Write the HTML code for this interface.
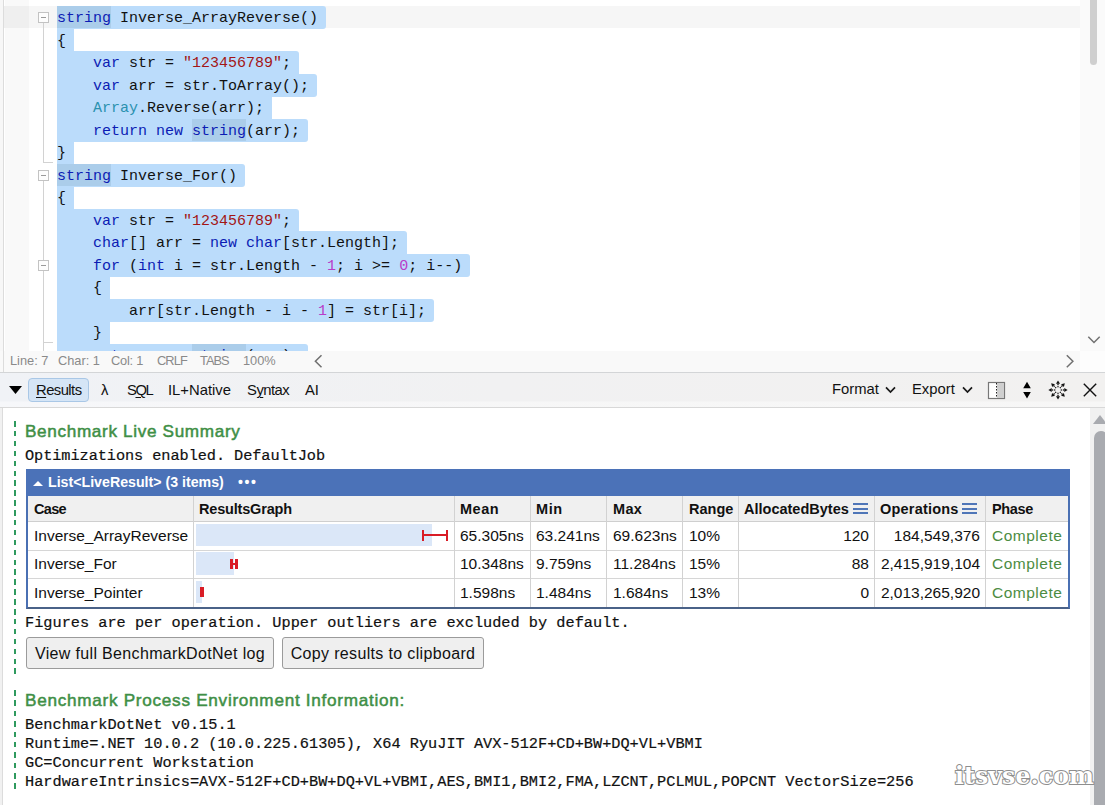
<!DOCTYPE html>
<html lang="en">
<head>
<meta charset="utf-8">
<title>LINQPad - Benchmark Live Summary</title>
<style>
*{box-sizing:border-box;margin:0;padding:0}
html,body{width:1105px;height:805px;overflow:hidden;background:#fff}
body{position:relative;font-family:"Liberation Sans","DejaVu Sans",sans-serif;color:#000}
.abs{position:absolute}

/* ---------- editor ---------- */
#ed{position:absolute;left:0;top:0;width:1105px;height:351px;overflow:hidden;background:#fff}
#ed .edge{position:absolute;left:0;top:0;width:4px;height:351px;background:#f7f7f7;border-right:1px solid #dcdcdc}
#ed .curline{position:absolute;left:4px;top:6px;width:1076px;height:22px;background:#f6f6f6}
#ed .curmargin{position:absolute;left:4px;top:6px;width:25px;height:22px;background:#efefef}
.sel{position:absolute;height:23px;background:#bbdcfb}
.wh{position:absolute;height:22px;background:#abcdea}
.cl{position:absolute;left:57px;height:22.5px;line-height:22.5px;white-space:pre;
    font-family:"Liberation Mono","DejaVu Sans Mono",monospace;font-size:15px;color:#111}
.k{color:#0c1cb4}.t{color:#2b91af}.s{color:#a31515}.n{color:#b83cc8}
.fbox{position:absolute;left:38px;width:11px;height:11px;border:1px solid #c3c3c3;background:#fdfdfd}
.fbox i{position:absolute;left:2px;top:4px;width:5px;height:1px;background:#9a9a9a}
.fv{position:absolute;left:43px;width:1px;background:#d2d2d2}
.fh{position:absolute;left:43px;width:10px;height:1px;background:#d2d2d2}
#vsb{position:absolute;left:1080px;top:0;width:25px;height:351px;background:#fafafa}
#vsb .th{position:absolute;left:10px;top:-6px;width:7px;height:71px;border-radius:4px;background:#cfcfcf}

/* ---------- status bar ---------- */
#st{position:absolute;left:0;top:351px;width:1105px;height:21px;background:#f9f9f9;border-left:1px solid #dcdcdc;border-left-width:0;
    font-size:12.8px;color:#8a8a8a;line-height:20px}
#st span{position:absolute;top:0;white-space:pre}

/* ---------- toolbar ---------- */
#tb{position:absolute;left:0;top:372px;width:1105px;height:36px;z-index:3;background:linear-gradient(#d3d5d7,#d3d5d7) top/100% 1px no-repeat,linear-gradient(#d8d8d8,#d8d8d8) bottom/100% 1px no-repeat,linear-gradient(to bottom,rgba(255,255,255,0) 29px,rgba(255,255,255,.4) 30px),linear-gradient(to right,#f0f2f6 0,#f1f1f2 45%,#f2f1f0 100%);
    font-size:14.8px;color:#111}
#tb .it{position:absolute;top:1px;height:35px;line-height:35px;white-space:pre}
#tb .btn{position:absolute;left:28px;top:6px;width:61px;height:24px;border:1px solid #a9c7e6;border-radius:4px;background:#d5e5f6}
u{text-decoration-thickness:1px;text-underline-offset:2px}

/* ---------- results ---------- */
#rs{position:absolute;left:0;top:407px;width:1105px;height:398px;background:#fff;overflow:hidden}
#rs .edge{position:absolute;left:0;top:0;width:3px;height:398px;background:#f1f1f1;border-right:1px solid #dcdcdc}
.dash{position:absolute;left:14px;width:2px;
  background:repeating-linear-gradient(to bottom,#2f9a5e 0,#2f9a5e var(--d),transparent var(--d),transparent var(--p))}
.h1{position:absolute;left:25px;margin-top:-0.5px;font-size:17.15px;font-weight:normal;color:#3f8f46;-webkit-text-stroke:0.5px #3f8f46;letter-spacing:0.58px;white-space:pre;line-height:22px;height:22px}
.mono{position:absolute;left:25px;font-family:"Liberation Mono","DejaVu Sans Mono",monospace;font-size:15.27px;
  white-space:pre;line-height:19px;height:19px;color:#111;margin-top:2px;-webkit-text-stroke:0.2px #111}
#tbl{position:absolute;left:26px;top:62px;width:1044px;height:140px;border:2px solid #4a70b3;border-top:0;border-bottom-color:#4a6288;background:#fff}
#tbl .cap{position:absolute;left:-2px;top:0;width:1044px;height:27px;background:#4b72b8;color:#fff;font-weight:bold;font-size:14.2px;line-height:26px}
#tbl .cap span{position:absolute;white-space:pre}
#tbl .hdr{position:absolute;left:0;top:27px;width:1040px;height:26px;background:#f0f0f0;border-bottom:1px solid #cfcfcf}
.vl{position:absolute;top:27px;width:1px;height:111px;background:#d2d2d2}
.hl{position:absolute;left:0;width:1040px;height:1px;background:#d6d6d6}
.th{position:absolute;top:27px;height:26px;line-height:27px;font-weight:bold;font-size:14.5px;white-space:pre;color:#111}
.td{position:absolute;height:28px;line-height:27px;font-size:15.5px;white-space:pre;color:#111}
.r{text-align:right}
.g{color:#4c8c42;letter-spacing:0.5px}
.bar{position:absolute;background:#dbe7f8}
.red{position:absolute;background:#d91c26}
.ham{position:absolute;top:34px;width:15px;height:11px;border-top:2px solid #4f76b8;border-bottom:2px solid #4f76b8}
.ham:after{content:"";position:absolute;left:0;top:2.5px;width:15px;height:2px;background:#4f76b8}
.pb{position:absolute;top:230px;height:32px;border:1px solid #9b9b9b;border-radius:3px;background:#efefef;
   font-size:16px;line-height:31px;text-align:center;white-space:pre;color:#111;letter-spacing:0.34px}
#rsb{position:absolute;left:1090px;top:0;width:17px;height:398px;background:#f1f1f1}
#rsb .th2{position:absolute;left:4px;top:24px;width:14px;height:400px;border-radius:7px;background:#a9abb0}
#rsb .up{position:absolute;left:3px;top:8px;width:0;height:0;border-left:7px solid transparent;border-right:7px solid transparent;border-bottom:9px solid #a9abb0}
#wm{position:absolute;z-index:5;left:955px;top:352px;font-family:"DejaVu Serif","Liberation Serif",serif;font-weight:bold;font-size:23.5px;
  color:#fff;-webkit-text-stroke:2px #8e8e8e;paint-order:stroke fill;white-space:pre;line-height:34px;letter-spacing:0.1px}
</style>
</head>
<body>

<!-- ================= EDITOR ================= -->
<div id="ed">
  <div class="edge"></div>
  <div class="abs" style="left:5px;top:0;width:24px;height:351px;background:#f9f9f9"></div>
  <div class="curline"></div>
  <div class="curmargin"></div>

  <!-- fold margin -->
  <div class="fv" style="top:23px;height:140px"></div>
  <div class="fh" style="top:162px"></div>
  <div class="fv" style="top:181px;height:170px"></div>
  <div class="fh" style="top:342px"></div>
  <div class="fbox" style="top:12px"><i></i></div>
  <div class="fbox" style="top:170px"><i></i></div>
  <div class="fbox" style="top:260px"><i></i></div>

<div class="sel" style="top:6.0px;left:57px;width:269.0px;border-radius:3px 3px 3px 0"></div>
<div class="wh" style="top:6.0px;left:57.0px;width:54.0px"></div>
<div class="sel" style="top:28.5px;left:57px;width:17.0px;border-radius:0px 0px 0px 0"></div>
<div class="sel" style="top:51.0px;left:57px;width:242.0px;border-radius:0px 3px 0px 0"></div>
<div class="sel" style="top:73.5px;left:57px;width:260.0px;border-radius:0px 3px 3px 0"></div>
<div class="sel" style="top:96.0px;left:57px;width:215.0px;border-radius:0px 0px 0px 0"></div>
<div class="sel" style="top:118.5px;left:57px;width:251.0px;border-radius:0px 3px 3px 0"></div>
<div class="wh" style="top:118.5px;left:192.0px;width:54.0px"></div>
<div class="sel" style="top:141.0px;left:57px;width:17.0px;border-radius:0px 0px 0px 0"></div>
<div class="sel" style="top:163.5px;left:57px;width:188.0px;border-radius:0px 3px 3px 0"></div>
<div class="wh" style="top:163.5px;left:57.0px;width:54.0px"></div>
<div class="sel" style="top:186.0px;left:57px;width:17.0px;border-radius:0px 0px 0px 0"></div>
<div class="sel" style="top:208.5px;left:57px;width:242.0px;border-radius:0px 3px 0px 0"></div>
<div class="sel" style="top:231.0px;left:57px;width:350.0px;border-radius:0px 3px 0px 0"></div>
<div class="sel" style="top:253.5px;left:57px;width:413.0px;border-radius:0px 3px 3px 0"></div>
<div class="sel" style="top:276.0px;left:57px;width:53.0px;border-radius:0px 0px 0px 0"></div>
<div class="sel" style="top:298.5px;left:57px;width:377.0px;border-radius:0px 3px 3px 0"></div>
<div class="sel" style="top:321.0px;left:57px;width:53.0px;border-radius:0px 0px 0px 0"></div>
<div class="sel" style="top:343.5px;left:57px;width:251.0px;border-radius:0px 3px 0px 0"></div>
<div class="wh" style="top:343.5px;left:192.0px;width:54.0px"></div>
<div class="cl" style="top:8.0px"><span class="k">string</span> Inverse_ArrayReverse()</div>
<div class="cl" style="top:30.5px">{</div>
<div class="cl" style="top:53.0px">    <span class="k">var</span> str = <span class="s">&quot;123456789&quot;</span>;</div>
<div class="cl" style="top:75.5px">    <span class="k">var</span> arr = str.ToArray();</div>
<div class="cl" style="top:98.0px">    <span class="t">Array</span>.Reverse(arr);</div>
<div class="cl" style="top:120.5px">    <span class="k">return</span> <span class="k">new</span> <span class="k">string</span>(arr);</div>
<div class="cl" style="top:143.0px">}</div>
<div class="cl" style="top:165.5px"><span class="k">string</span> Inverse_For()</div>
<div class="cl" style="top:188.0px">{</div>
<div class="cl" style="top:210.5px">    <span class="k">var</span> str = <span class="s">&quot;123456789&quot;</span>;</div>
<div class="cl" style="top:233.0px">    <span class="k">char</span>[] arr = <span class="k">new</span> <span class="k">char</span>[str.Length];</div>
<div class="cl" style="top:255.5px">    <span class="k">for</span> (<span class="k">int</span> i = str.Length - <span class="n">1</span>; i &gt;= <span class="n">0</span>; i--)</div>
<div class="cl" style="top:278.0px">    {</div>
<div class="cl" style="top:300.5px">        arr[str.Length - i - <span class="n">1</span>] = str[i];</div>
<div class="cl" style="top:323.0px">    }</div>
<div class="cl" style="top:345.5px">    <span class="k">return</span> <span class="k">new</span> <span class="k">string</span>(arr);</div>

  <div id="vsb"><div class="th"></div>
    <svg class="abs" style="left:7px;top:335px" width="14" height="10" viewBox="0 0 14 10"><path d="M1.3 1.8 L7 7.5 L12.7 1.8" fill="none" stroke="#707070" stroke-width="1.5"/></svg>
  </div>
</div>

<!-- ================= STATUS BAR ================= -->
<div id="st">
  <div class="abs" style="left:1080px;top:0;width:25px;height:21px;background:#fdfdfd"></div>
  <div class="abs" style="left:3px;top:0;width:1px;height:21px;background:#dcdcdc"></div>
  <span style="left:10px">Line: 7</span>
  <span style="left:58px">Char: 1</span>
  <span style="left:111px;letter-spacing:-0.2px">Col: 1</span>
  <span style="left:157px;letter-spacing:-0.9px">CRLF</span>
  <span style="left:200px;letter-spacing:-0.95px">TABS</span>
  <span style="left:243px">100%</span>
  <svg class="abs" style="left:313px;top:3px" width="10" height="14" viewBox="0 0 10 14"><path d="M8.5 1.2 L2.4 7.2 L8.5 13.2" fill="none" stroke="#707070" stroke-width="1.5"/></svg>
  <svg class="abs" style="left:1065px;top:3px" width="10" height="14" viewBox="0 0 10 14"><path d="M1.8 1.2 L7.9 7.2 L1.8 13.2" fill="none" stroke="#707070" stroke-width="1.5"/></svg>
</div>

<!-- ================= TOOLBAR ================= -->
<div id="tb">
  <svg class="abs" style="left:9px;top:14px" width="13" height="8" viewBox="0 0 13 8"><path d="M0 0 H13 L6.5 8 Z" fill="#000"/></svg>
  <div class="btn"></div>
  <span class="it" style="left:36px;letter-spacing:-0.55px"><u>R</u>esults</span>
  <span class="it" style="left:101px">λ</span>
  <span class="it" style="left:127px;letter-spacing:-1.4px">S<u>Q</u>L</span>
  <span class="it" style="left:168px">IL+Native</span>
  <span class="it" style="left:247px;letter-spacing:-0.5px">S<u>y</u>ntax</span>
  <span class="it" style="left:305px">AI</span>

  <span class="it" style="left:832px;top:0">Format</span>
  <svg class="abs" style="left:885px;top:14px" width="11" height="8" viewBox="0 0 11 8"><path d="M1 1.3 L5.5 6 L10 1.3" fill="none" stroke="#1a1a1a" stroke-width="1.7"/></svg>
  <span class="it" style="left:912px;top:0">Export</span>
  <svg class="abs" style="left:962px;top:14px" width="11" height="8" viewBox="0 0 11 8"><path d="M1 1.3 L5.5 6 L10 1.3" fill="none" stroke="#1a1a1a" stroke-width="1.7"/></svg>

  <!-- split icon -->
  <svg class="abs" style="left:987px;top:9px" width="19" height="19" viewBox="0 0 19 19">
    <rect x="1.5" y="1.5" width="16" height="16" fill="#fff" stroke="#777" stroke-width="1.2"/>
    <rect x="10" y="2" width="7" height="15" fill="#cfcfcf"/>
    <path d="M9.5 2 V17" stroke="#222" stroke-width="1" stroke-dasharray="1.5 1.5"/>
  </svg>
  <!-- up/down arrows -->
  <svg class="abs" style="left:1022px;top:9px" width="10" height="19" viewBox="0 0 10 19">
    <path d="M5 0.8 L8.8 7.2 H1.2 Z M5 17.6 L8.8 11 H1.2 Z" fill="#000"/>
  </svg>
  <!-- expand arrows -->
  <svg class="abs" style="left:1048px;top:8px" width="20" height="20" viewBox="0 0 20 20">
    <g fill="#111">
      <g transform="rotate(0 10 10)"><path d="M10 0.4 L12 3.7 H8 Z"/><rect x="9.35" y="3.7" width="1.3" height="1.5"/><rect x="9.35" y="6.1" width="1.3" height="1.2"/></g>
      <g transform="rotate(45 10 10)"><path d="M10 0.4 L12 3.7 H8 Z"/><rect x="9.35" y="3.7" width="1.3" height="1.5"/><rect x="9.35" y="6.1" width="1.3" height="1.2"/></g>
      <g transform="rotate(90 10 10)"><path d="M10 0.4 L12 3.7 H8 Z"/><rect x="9.35" y="3.7" width="1.3" height="1.5"/><rect x="9.35" y="6.1" width="1.3" height="1.2"/></g>
      <g transform="rotate(135 10 10)"><path d="M10 0.4 L12 3.7 H8 Z"/><rect x="9.35" y="3.7" width="1.3" height="1.5"/><rect x="9.35" y="6.1" width="1.3" height="1.2"/></g>
      <g transform="rotate(180 10 10)"><path d="M10 0.4 L12 3.7 H8 Z"/><rect x="9.35" y="3.7" width="1.3" height="1.5"/><rect x="9.35" y="6.1" width="1.3" height="1.2"/></g>
      <g transform="rotate(225 10 10)"><path d="M10 0.4 L12 3.7 H8 Z"/><rect x="9.35" y="3.7" width="1.3" height="1.5"/><rect x="9.35" y="6.1" width="1.3" height="1.2"/></g>
      <g transform="rotate(270 10 10)"><path d="M10 0.4 L12 3.7 H8 Z"/><rect x="9.35" y="3.7" width="1.3" height="1.5"/><rect x="9.35" y="6.1" width="1.3" height="1.2"/></g>
      <g transform="rotate(315 10 10)"><path d="M10 0.4 L12 3.7 H8 Z"/><rect x="9.35" y="3.7" width="1.3" height="1.5"/><rect x="9.35" y="6.1" width="1.3" height="1.2"/></g>
    </g>
  </svg>
  <!-- close -->
  <svg class="abs" style="left:1083px;top:11px" width="14" height="14" viewBox="0 0 14 14"><path d="M0.8 0.8 L13.2 13.2 M13.2 0.8 L0.8 13.2" stroke="#111" stroke-width="1.4" fill="none"/></svg>
</div>

<!-- ================= RESULTS ================= -->
<div id="rs">
  <div class="edge"></div>
  <div class="dash" style="top:14px;height:253px;--d:5.5px;--p:9.9px"></div>
  <div class="dash" style="top:283.3px;height:99px;--d:5.6px;--p:10.38px"></div>

  <div class="h1" style="top:13px;letter-spacing:0.66px">Benchmark Live Summary</div>
  <div class="mono" style="top:38px;letter-spacing:-0.07px">Optimizations enabled. DefaultJob</div>

  <div id="tbl">
    <div class="cap">
      <svg class="abs" style="left:7px;top:11.5px" width="10" height="5" viewBox="0 0 10 5"><path d="M0 5 L5 0 L10 5 Z" fill="#fff"/></svg>
      <span style="left:22px">List&lt;LiveResult&gt; (3 items)</span>
      <span style="left:212px;letter-spacing:1.6px;font-size:14px">•••</span>
    </div>
    <div class="hdr"></div>
    <div class="hl" style="top:81px"></div>
    <div class="hl" style="top:109px"></div>
    <div class="vl" style="left:165px"></div>
    <div class="vl" style="left:426px"></div>
    <div class="vl" style="left:502px"></div>
    <div class="vl" style="left:578px"></div>
    <div class="vl" style="left:654px"></div>
    <div class="vl" style="left:710px"></div>
    <div class="vl" style="left:846px"></div>
    <div class="vl" style="left:957px"></div>

    <span class="th" style="left:6px;letter-spacing:-0.7px">Case</span>
    <span class="th" style="left:171px;letter-spacing:-0.18px">ResultsGraph</span>
    <span class="th" style="left:432px;letter-spacing:0.5px">Mean</span>
    <span class="th" style="left:508px;letter-spacing:0.55px">Min</span>
    <span class="th" style="left:585px;letter-spacing:0.3px">Max</span>
    <span class="th" style="left:661px">Range</span>
    <span class="th" style="left:716px">AllocatedBytes</span>
    <span class="th" style="left:852px;letter-spacing:0.2px">Operations</span>
    <span class="th" style="left:964px;letter-spacing:-0.35px">Phase</span>
    <div class="ham" style="left:825px"></div>
    <div class="ham" style="left:934px"></div>

    <!-- row 1 -->
    <span class="td" style="left:6px;top:53px">Inverse_ArrayReverse</span>
    <div class="bar" style="left:168px;top:55px;width:236px;height:22px"></div>
    <div class="red" style="left:394px;top:61px;width:2px;height:11px"></div>
    <div class="red" style="left:394px;top:65px;width:26px;height:2px"></div>
    <div class="red" style="left:418px;top:61px;width:2px;height:11px"></div>
    <span class="td" style="left:432px;top:53px">65.305ns</span>
    <span class="td" style="left:508px;top:53px">63.241ns</span>
    <span class="td" style="left:585px;top:53px">69.623ns</span>
    <span class="td" style="left:661px;top:53px">10%</span>
    <span class="td r" style="left:716px;top:53px;width:125px">120</span>
    <span class="td r" style="left:852px;top:53px;width:100px">184,549,376</span>
    <span class="td g" style="left:964px;top:53px">Complete</span>
    <!-- row 2 -->
    <span class="td" style="left:6px;top:81px">Inverse_For</span>
    <div class="bar" style="left:168px;top:83px;width:38px;height:22.5px"></div>
    <div class="red" style="left:202px;top:90px;width:3px;height:10px"></div>
    <div class="red" style="left:202px;top:94px;width:8px;height:2px"></div>
    <div class="red" style="left:207px;top:90px;width:3px;height:10px"></div>
    <span class="td" style="left:432px;top:81px">10.348ns</span>
    <span class="td" style="left:508px;top:81px">9.759ns</span>
    <span class="td" style="left:585px;top:81px">11.284ns</span>
    <span class="td" style="left:661px;top:81px">15%</span>
    <span class="td r" style="left:716px;top:81px;width:125px">88</span>
    <span class="td r" style="left:852px;top:81px;width:100px">2,415,919,104</span>
    <span class="td g" style="left:964px;top:81px">Complete</span>
    <!-- row 3 -->
    <span class="td" style="left:6px;top:110px">Inverse_Pointer</span>
    <div class="bar" style="left:168px;top:112px;width:6px;height:22px"></div>
    <div class="red" style="left:172px;top:118px;width:4px;height:10px"></div>
    <span class="td" style="left:432px;top:110px">1.598ns</span>
    <span class="td" style="left:508px;top:110px">1.484ns</span>
    <span class="td" style="left:585px;top:110px">1.684ns</span>
    <span class="td" style="left:661px;top:110px">13%</span>
    <span class="td r" style="left:716px;top:110px;width:125px">0</span>
    <span class="td r" style="left:852px;top:110px;width:100px">2,013,265,920</span>
    <span class="td g" style="left:964px;top:110px">Complete</span>
  </div>

  <div class="mono" style="top:205px">Figures are per operation. Upper outliers are excluded by default.</div>
  <div class="pb" style="left:26px;width:248px">View full BenchmarkDotNet log</div>
  <div class="pb" style="left:282px;width:202px">Copy results to clipboard</div>

  <div class="h1" style="top:282px;letter-spacing:0.725px">Benchmark Process Environment Information:</div>
  <div class="mono" style="top:307px">BenchmarkDotNet v0.15.1</div>
  <div class="mono" style="top:326px">Runtime=.NET 10.0.2 (10.0.225.61305), X64 RyuJIT AVX-512F+CD+BW+DQ+VL+VBMI</div>
  <div class="mono" style="top:345px">GC=Concurrent Workstation</div>
  <div class="mono" style="top:364px">HardwareIntrinsics=AVX-512F+CD+BW+DQ+VL+VBMI,AES,BMI1,BMI2,FMA,LZCNT,PCLMUL,POPCNT VectorSize=256</div>

  <div id="rsb"><div class="up"></div><div class="th2"></div></div>
  <div id="wm">itsvse.com</div>
</div>

</body>
</html>
